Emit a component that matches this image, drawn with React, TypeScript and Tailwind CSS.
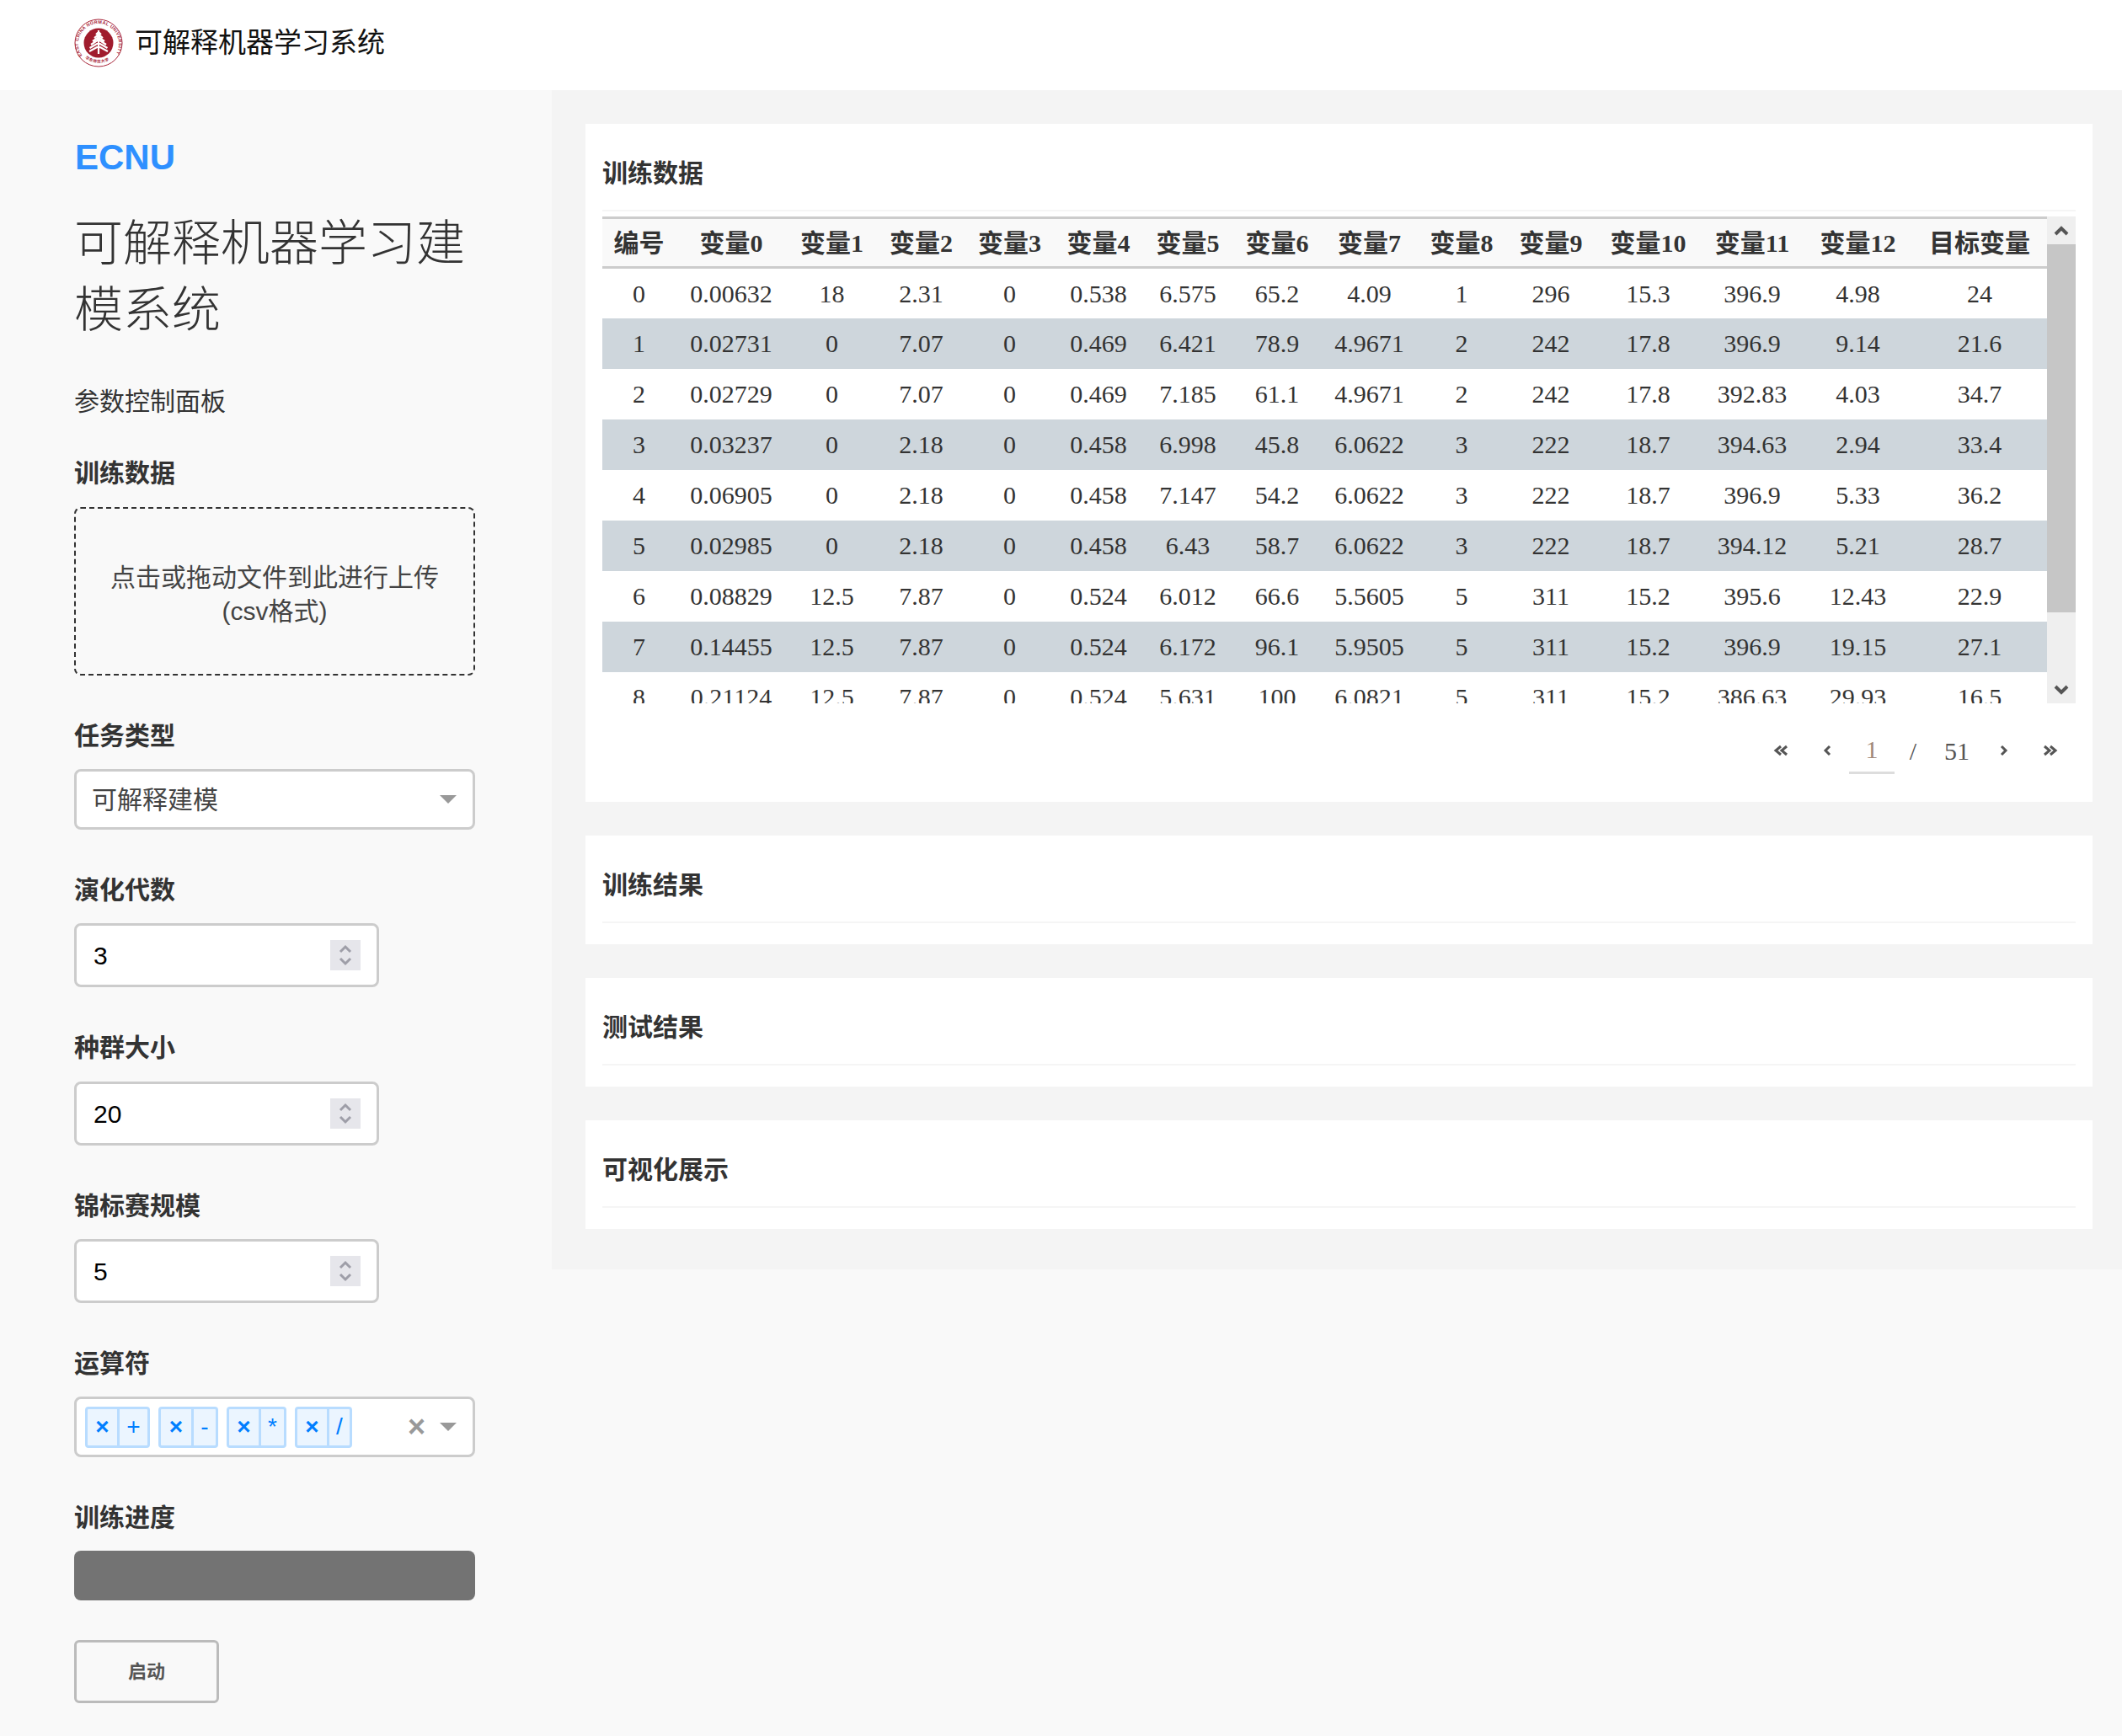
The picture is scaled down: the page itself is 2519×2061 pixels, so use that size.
import React from "react";

const sans = "font-['Liberation_Sans','Noto_Sans_CJK_SC',sans-serif]";

const columns = [
  { label: "编号", width: "w-[87px]" },
  { label: "变量0", width: "w-[132px]" },
  { label: "变量1", width: "w-[107px]" },
  { label: "变量2", width: "w-[105px]" },
  { label: "变量3", width: "w-[105px]" },
  { label: "变量4", width: "w-[106px]" },
  { label: "变量5", width: "w-[106px]" },
  { label: "变量6", width: "w-[106px]" },
  { label: "变量7", width: "w-[113px]" },
  { label: "变量8", width: "w-[106px]" },
  { label: "变量9", width: "w-[106px]" },
  { label: "变量10", width: "w-[125px]" },
  { label: "变量11", width: "w-[122px]" },
  { label: "变量12", width: "w-[129px]" },
  { label: "目标变量", width: "w-[160px]" },
];

const rows = [
  ["0", "0.00632", "18", "2.31", "0", "0.538", "6.575", "65.2", "4.09", "1", "296", "15.3", "396.9", "4.98", "24"],
  ["1", "0.02731", "0", "7.07", "0", "0.469", "6.421", "78.9", "4.9671", "2", "242", "17.8", "396.9", "9.14", "21.6"],
  ["2", "0.02729", "0", "7.07", "0", "0.469", "7.185", "61.1", "4.9671", "2", "242", "17.8", "392.83", "4.03", "34.7"],
  ["3", "0.03237", "0", "2.18", "0", "0.458", "6.998", "45.8", "6.0622", "3", "222", "18.7", "394.63", "2.94", "33.4"],
  ["4", "0.06905", "0", "2.18", "0", "0.458", "7.147", "54.2", "6.0622", "3", "222", "18.7", "396.9", "5.33", "36.2"],
  ["5", "0.02985", "0", "2.18", "0", "0.458", "6.43", "58.7", "6.0622", "3", "222", "18.7", "394.12", "5.21", "28.7"],
  ["6", "0.08829", "12.5", "7.87", "0", "0.524", "6.012", "66.6", "5.5605", "5", "311", "15.2", "395.6", "12.43", "22.9"],
  ["7", "0.14455", "12.5", "7.87", "0", "0.524", "6.172", "96.1", "5.9505", "5", "311", "15.2", "396.9", "19.15", "27.1"],
  ["8", "0.21124", "12.5", "7.87", "0", "0.524", "5.631", "100", "6.0821", "5", "311", "15.2", "386.63", "29.93", "16.5"],
];

function Logo() {
  return (
    <svg width="58" height="58" viewBox="0 0 58 58">
      <defs>
        <path id="ring" d="M9.5 44 A24 24 0 1 1 48.5 44" />
        <path id="ringBottom" d="M13 47 A25.5 25.5 0 0 0 45 47" />
      </defs>
      <circle cx="29" cy="29" r="28" fill="#fff" stroke="#a8263a" strokeWidth="1" />
      <circle cx="29" cy="29" r="17.5" fill="#a01c2d" />
      <text fill="#a8263a" fontSize="5.4" fontWeight="700" fontFamily="Liberation Sans, sans-serif">
        <textPath href="#ring" textLength="102">EAST CHINA NORMAL UNIVERSITY</textPath>
      </text>
      <text fill="#a8263a" fontSize="4.6" fontWeight="700" fontFamily="Noto Sans CJK SC, sans-serif">
        <textPath href="#ringBottom" textLength="30">华东师范大学</textPath>
      </text>
      <path
        d="M29 14V42M26 19l3-3 3 3M24 23l5-4 5 4M22 27l7-5 7 5M20 31l9-6 9 6M18.500 35l10.500-6 10.500 6M18 39l11-6 11 6"
        fill="none"
        stroke="#fff"
        strokeWidth="2.200"
      />
    </svg>
  );
}

function Caret() {
  return <span className="h-0 w-0 border-x-[10px] border-t-[10px] border-x-transparent border-t-[#999]" />;
}

function Label({ children }: { children: React.ReactNode }) {
  return <div className="h-10 text-[30px] leading-10 font-bold text-[#333]">{children}</div>;
}

function Spinner() {
  return (
    <svg width="36" height="36" viewBox="0 0 36 36" className="bg-[#e6e6eb]" fill="none" stroke="#9e9ea8" strokeWidth="3">
      <path d="M12 14l6-6 6 6M12 22l6 6 6-6" />
    </svg>
  );
}

function NumberField({ value }: { value: string }) {
  return (
    <div className="flex h-[76px] w-[362px] items-center justify-between rounded-lg border-[3px] border-[#ccc] bg-white pr-[19px] pl-5">
      <span className="text-[30px] text-black">{value}</span>
      <Spinner />
    </div>
  );
}

function Tag({ text, closeWidth, width }: { text: string; closeWidth: string; width: string }) {
  return (
    <div className={`flex h-[49px] items-center rounded border-[3px] border-[#b8dcff] bg-[#ebf5ff] text-[28px] text-[#007eff] ${width}`}>
      <span className={`flex h-full items-center justify-center border-r-[3px] border-[#b8dcff] font-bold ${closeWidth}`}>×</span>
      <span className="flex-1 text-center">{text}</span>
    </div>
  );
}

function Sidebar() {
  return (
    <aside className="w-[655px] shrink-0 px-[88px] pt-[55px]">
      <div className="h-[50px] pl-[1px] text-[42px] leading-[50px] font-bold text-[#2e90ff]">ECNU</div>
      <h1 className="mt-[37px] w-[470px] text-[58px] leading-[79px] font-light text-[#333]">可解释机器学习建模系统</h1>
      <div className="mt-[50px] h-10 text-[30px] leading-10 text-[#333]">参数控制面板</div>
      <div className="mt-[45px] flex flex-col gap-[52px]">
        <section className="flex flex-col gap-5">
          <Label>训练数据</Label>
          <div className="flex h-[200px] w-[476px] flex-col items-center justify-center rounded-lg border-2 border-dashed border-[#333] pt-2 text-[30px] leading-10 text-[#444]">
            <span>点击或拖动文件到此进行上传</span>
            <span>(csv格式)</span>
          </div>
        </section>
        <section className="flex flex-col gap-[19px]">
          <Label>任务类型</Label>
          <div className="flex h-[72px] w-[476px] items-center justify-between rounded-lg border-[3px] border-[#ccc] bg-white pr-[19px] pl-[18px] text-[30px] text-[#444]">
            可解释建模
            <Caret />
          </div>
        </section>
        <section className="flex flex-col gap-[19px]">
          <Label>演化代数</Label>
          <NumberField value="3" />
        </section>
        <section className="flex flex-col gap-5">
          <Label>种群大小</Label>
          <NumberField value="20" />
        </section>
        <section className="flex flex-col gap-[19px]">
          <Label>锦标赛规模</Label>
          <NumberField value="5" />
        </section>
        <section className="flex flex-col gap-[19px]">
          <Label>运算符</Label>
          <div className="flex h-[72px] w-[476px] items-center gap-[10px] rounded-lg border-[3px] border-[#ccc] bg-white pr-[19px] pl-[10px]">
            <Tag text="+" closeWidth="w-[38px]" width="w-[77px]" />
            <Tag text="-" closeWidth="w-[39px]" width="w-[71px]" />
            <Tag text="*" closeWidth="w-[38px]" width="w-[71px]" />
            <Tag text="/" closeWidth="w-[38px]" width="w-[68px]" />
            <span className="mr-[7px] ml-auto text-[36px] leading-none font-bold text-[#999]">×</span>
            <Caret />
          </div>
        </section>
        <section className="flex flex-col gap-[19px]">
          <Label>训练进度</Label>
          <div className="h-[59px] w-[476px] rounded-lg bg-[#737373]" />
        </section>
      </div>
      <button className="mt-[47px] flex h-[75px] w-[172px] items-center justify-center rounded-md border-[3px] border-[#bbb] text-[22px] font-bold text-[#555]">
        启动
      </button>
    </aside>
  );
}

function Scrollbar() {
  return (
    <div className="flex h-[578px] w-[34px] shrink-0 flex-col bg-[#efefef]">
      <div className="flex h-[33px] items-center justify-center">
        <svg width="18" height="12" viewBox="0 0 18 12" fill="none" stroke="#555" strokeWidth="4">
          <path d="M2 10l7-7 7 7" />
        </svg>
      </div>
      <div className="h-[437px] bg-[#c6c6c6]" />
      <div className="mt-auto flex h-[33px] items-center justify-center">
        <svg width="18" height="12" viewBox="0 0 18 12" fill="none" stroke="#555" strokeWidth="4">
          <path d="M2 2l7 7 7-7" />
        </svg>
      </div>
    </div>
  );
}

function DataTable() {
  return (
    <div className="mt-[6px] flex items-start">
      <div className="h-[578px] w-[1715px] overflow-hidden">
        <table className="w-[1715px] table-fixed font-['Liberation_Serif','Noto_Sans_CJK_SC',serif] text-[30px] text-[#333]">
          <colgroup>
            {columns.map((c) => (
              <col key={c.label} className={c.width} />
            ))}
          </colgroup>
          <thead>
            <tr className="h-[59px] border-y-[3px] border-[#ccc] bg-[#f9f9f9]">
              {columns.map((c) => (
                <th key={c.label} className="p-0 text-center font-bold whitespace-nowrap">
                  {c.label}
                </th>
              ))}
            </tr>
          </thead>
          <tbody>
            {rows.map((row, i) => (
              <tr key={row[0]} className={`h-[60px] ${i % 2 === 1 ? "bg-[#ced6dc]" : "bg-white"}`}>
                {row.map((cell, j) => (
                  <td key={j} className="p-0 text-center">
                    {cell}
                  </td>
                ))}
              </tr>
            ))}
          </tbody>
        </table>
      </div>
      <Scrollbar />
    </div>
  );
}

function PagerArrow({ d, width }: { d: string; width: number }) {
  return (
    <svg width={width} height="14" viewBox={`0 0 ${width} 14`} fill="none" stroke="#555" strokeWidth="3">
      <path d={d} />
    </svg>
  );
}

function Pager() {
  return (
    <div className="mt-[28px] mb-2 flex h-[56px] items-center justify-end pr-[10px] font-['Liberation_Serif',serif] text-[30px] text-[#555]">
      <span className="flex w-[40px] justify-center">
        <PagerArrow width={18} d="M9 2L3 7l6 5M16 2l-6 5 6 5" />
      </span>
      <span className="ml-[25px] flex w-[20px] justify-center">
        <PagerArrow width={10} d="M8 2L3 7l5 5" />
      </span>
      <span className="ml-[16px] flex h-[56px] w-[54px] items-center justify-center border-b-[3px] border-[#ddd] text-[#a08878]">1</span>
      <span className="ml-[14px] w-[16px] text-center">/</span>
      <span className="ml-[29px] w-[30px] text-center">51</span>
      <span className="ml-[31px] flex w-[20px] justify-center">
        <PagerArrow width={10} d="M2 2l5 5-5 5" />
      </span>
      <span className="ml-[25px] flex w-[40px] justify-center">
        <PagerArrow width={18} d="M2 2l6 5-6 5M9 2l6 5-6 5" />
      </span>
    </div>
  );
}

function Card({ title, children }: { title: string; children?: React.ReactNode }) {
  return (
    <section className="bg-white px-5 pt-[38px] pb-[25px]">
      <h2 className="h-[42px] text-[30px] leading-[42px] font-bold text-[#333]">{title}</h2>
      <div className="mt-[22px] h-[2px] bg-[#f5f5f5]" />
      {children}
    </section>
  );
}

export default function App() {
  return (
    <div className={`min-h-[2061px] bg-[#f9f9f9] ${sans}`}>
      <header className="flex h-[107px] items-center gap-[14px] bg-white pb-[6px] pl-[88px]">
        <Logo />
        <span className="text-[33px] text-[#111]">可解释机器学习系统</span>
      </header>
      <div className="flex items-start">
        <Sidebar />
        <main className="flex min-w-0 flex-1 flex-col gap-10 bg-[#f4f4f4] pt-10 pr-[35px] pb-12 pl-10">
          <Card title="训练数据">
            <DataTable />
            <Pager />
          </Card>
          <Card title="训练结果" />
          <Card title="测试结果" />
          <Card title="可视化展示" />
        </main>
      </div>
    </div>
  );
}
